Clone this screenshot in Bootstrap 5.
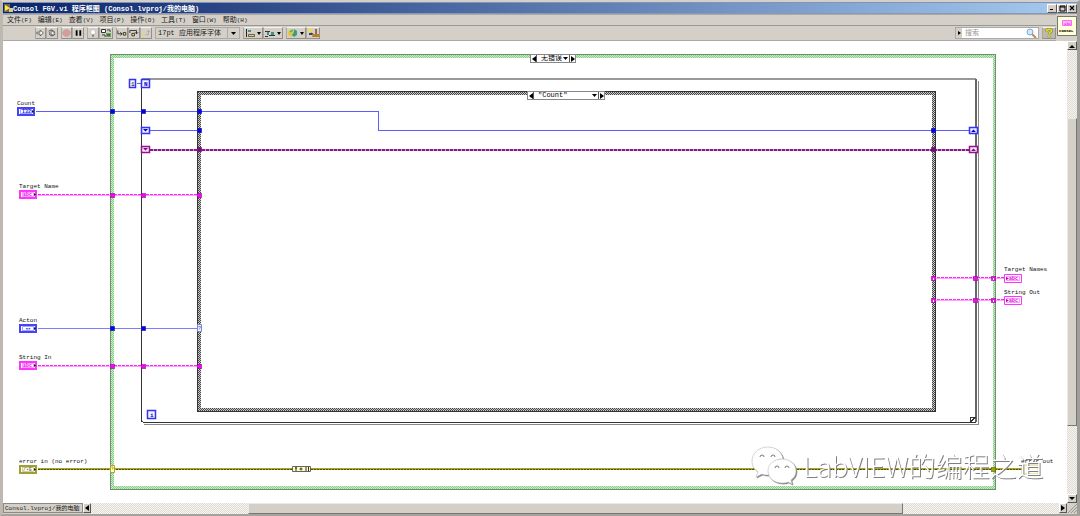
<!DOCTYPE html>
<html lang="zh-CN">
<head>
<meta charset="utf-8">
<meta name="viewport" content="width=device-width, initial-scale=1">
<title>Consol FGV.vi 程序框图</title>
<link rel="stylesheet" href="https://cdn.jsdelivr.net/npm/bootstrap@5.3.0/dist/css/bootstrap.min.css">
<style>
:root{--face:#d4d0c8}
body{font:6px/10px "Liberation Mono","Noto Sans CJK SC",monospace;color:#222;background:var(--face)}
.zh{font-family:"Noto Sans CJK SC",sans-serif;font-size:7px}
.app-window{border:solid var(--face);border-width:2px 3px;border-left-color:#bdb9b1;border-right-color:#a09e9a;border-bottom-color:#a5a29c}
.work-area{min-height:0}
.titlebar{height:12px;background:linear-gradient(90deg,#0a246a,#a6caf0);border-top:1px solid #7f93bb;border-bottom:1px solid #8d98b0;color:#fff;font-size:7px;font-weight:700;padding-left:1px}
button,select,input{font:inherit;color:inherit;border-radius:0;appearance:none;outline-offset:-1px}
.win-btn{width:10px;height:9px;padding:0;border:1px solid;border-color:#fff #555 #555 #fff;background:var(--face);display:flex;align-items:center;justify-content:center;flex:none}
.menubar{height:12px;border-bottom:1px solid #999;border-top:1px solid #aaa}
.menubar a{color:#222;text-decoration:none;white-space:nowrap}
.menu-items{gap:6px}
.toolbar{height:15px;border-bottom:1px solid #aaa;padding:1px 0 1px 32px}
.tool{height:12px;width:12px;padding:0;border:1px solid;border-color:#f5f3ee #929089 #929089 #aaa79f;background:var(--face);display:flex;align-items:center;justify-content:center;flex:none}
.tool svg{width:100%;height:100%;display:block}
.tool-wide{width:20px}
.tool-mid{width:14px}
.tool-slim{width:11px}
.tool-help{background:#bcb9b0}
.group-end{margin-right:3px}
.font-box{width:85px;height:12px;position:relative;border:1px solid #aaa}
.font-box select{width:100%;height:100%;border:0;background:transparent;padding:0 0 0 2px;font:7px/9px "Liberation Mono","Noto Sans CJK SC",monospace}
.font-box svg{position:absolute;right:0;top:0;pointer-events:none}
.search-box{width:84px;height:12px;border:1px solid #aaa;background:var(--face);margin-right:3px}
.search-box input{width:0;flex:1;height:10px;border:0;padding:0 3px;background:#fff;font-size:7px}
.search-box input::placeholder{color:#999}
.vi-icon{width:20px;height:20px;margin:2px 0 0 1px;border:1px solid #777;background:#ffffd8;padding:0;display:block}
.vi-icon svg{display:block;width:100%;height:100%}
.track{background:repeating-conic-gradient(#dedbd4 0 25%,#f6f5f2 0 50%) 0 0/2px 2px}
.thumb{background:var(--face);border:1px solid;border-color:#eceae5 #777 #777 #eceae5}
.vbar{width:10px}
.hbar{height:11px}
.hbar .win-btn{width:8px;height:10px}
.project{width:80px;height:10px;border:1px solid #8b8982;background:var(--face);padding:0 1px;line-height:8px;text-align:left;white-space:nowrap}
.project .zh{font-size:6px}
.diagram{background:#fff;min-width:0;min-height:0}
.diagram>svg{display:block;width:100%;height:100%}
.label-text{font:6px "Liberation Mono",monospace;fill:#111}
.case-sel{height:9px;background:#fff;border:1px solid #888}
.case-sel button{width:5px;padding:0;border:0;background:#fff;display:flex;align-items:center;justify-content:center}
.case-sel select{flex:1;width:0;height:7px;border:solid #555;border-width:0 1px;padding:0 0 0 4px;background:#fff;font:7px/7px "Liberation Mono","Noto Sans CJK SC",monospace;color:#000}
.case-sel .arrow{position:absolute;right:7px;top:2px;pointer-events:none}
.watermark{font:300 27px "Noto Sans CJK SC",sans-serif;fill:#fff}
.wm{filter:drop-shadow(1px 1px 0 #808080)}
</style>
<script src="https://cdn.jsdelivr.net/npm/bootstrap@5.3.0/dist/js/bootstrap.bundle.min.js"></script>
</head>
<body>
<div class="app-window vh-100 d-flex flex-column overflow-hidden">
  <header class="titlebar d-flex align-items-center flex-shrink-0">
    <svg width="9" height="10" viewBox="0 0 9 10" class="flex-shrink-0"><path d="M0 1h6v8H0z" fill="#776b45"/><path d="M1 2l5 3-5 3z" fill="#ffe55c"/><path d="M5 5h4v4H5z" fill="#d9c98a"/></svg>
    <span class="flex-grow-1 text-nowrap">Consol FGV.vi <span class="zh">程序框图</span> (Consol.lvproj/<span class="zh">我的电脑</span>)</span>
    <button class="win-btn" aria-label="最小化"><svg width="6" height="6"><path d="M1 4h3v1H1z"/></svg></button>
    <button class="win-btn" aria-label="最大化"><svg width="7" height="7"><path d="M1 1h5v5H1zM1 2h5" fill="none" stroke="#000"/></svg></button>
    <button class="win-btn" aria-label="关闭"><svg width="6" height="6"><path d="M1 1l4 4M5 1L1 5" stroke="#000" stroke-width="1.2"/></svg></button>
  </header>
  <div class="d-flex flex-shrink-0">
    <div class="flex-grow-1">
      <nav class="menubar d-flex align-items-center ps-1">
        <div class="menu-items d-flex">
        <a href="#"><span class="zh">文件</span>(F)</a><a href="#"><span class="zh">编辑</span>(E)</a><a href="#"><span class="zh">查看</span>(V)</a><a href="#"><span class="zh">项目</span>(P)</a><a href="#"><span class="zh">操作</span>(O)</a><a href="#"><span class="zh">工具</span>(T)</a><a href="#"><span class="zh">窗口</span>(W)</a><a href="#"><span class="zh">帮助</span>(H)</a>
        </div>
      </nav>
      <div class="toolbar d-flex">
        <button class="tool tool-slim" aria-label="运行"><svg viewBox="0 0 11 10"><path d="M1 4h4V1.500l4 3.500-4 3.500V6H1z" fill="#fff" stroke="#333" stroke-width=".8"/></svg></button>
        <button class="tool group-end" aria-label="连续运行"><svg viewBox="0 0 12 10"><path d="M2 3c3-3 7-1 7 2M10 6c-3 4-7 2-7 0" fill="none" stroke="#333"/><path d="M3 4h3V2l3 3-3 3V6H3z" fill="#fff" stroke="#333" stroke-width=".7"/></svg></button>
        <button class="tool tool-slim" aria-label="中止"><svg viewBox="0 0 11 10"><path d="M3.500 1h4L10 3.500v3L7.500 9h-4L1 6.500v-3z" fill="#d99b99" stroke="#b9a5a2"/></svg></button>
        <button class="tool group-end" aria-label="暂停"><svg viewBox="0 0 11 10"><path d="M3 2h2v6H3zM7 2h2v6H7z"/></svg></button>
        <button class="tool" aria-label="高亮执行"><svg viewBox="0 0 11 10"><circle cx="5.500" cy="4" r="2.800" fill="#fff" stroke="#aaa" stroke-width=".7"/><path d="M4.500 7h2v2h-2z" fill="#777"/></svg></button>
        <button class="tool tool-mid group-end" aria-label="保存连线值"><svg viewBox="0 0 12 10"><path d="M1.500 1.500h4v3h-4zM7 2h3v2M2 7h3v2" fill="#fff" stroke="#333"/><path d="M6 5h5v4H6z" fill="#6aa35a"/><path d="M7 7h3" stroke="#234"/></svg></button>
        <button class="tool" aria-label="单步步入"><svg viewBox="0 0 12 10"><path d="M1 2v4h5M4 4l2 2-2 2" fill="none" stroke="#222"/><path d="M7.500 4.500h3v3h-3z" fill="#ffe36a" stroke="#222"/></svg></button>
        <button class="tool" aria-label="单步步过"><svg viewBox="0 0 12 10"><path d="M1 5V2h8v4M7 4l2 2 2-2" fill="none" stroke="#222"/><path d="M3.500 5.500h3v3h-3z" fill="#ffe36a" stroke="#222"/></svg></button>
        <button class="tool group-end" aria-label="单步步出"><svg viewBox="0 0 12 10"><path d="M5 7h4V2M7 4l2-2 2 2" fill="none" stroke="#aaa"/><path d="M1 6h4v3H1z" fill="#e5d48c"/></svg></button>
        <div class="font-box group-end"><select aria-label="字体"><option>17pt 应用程序字体</option></select><svg width="12" height="10"><path d="M.5 0v10" stroke="#aaa"/><path d="M4 4h5L6.500 7z"/></svg></div>
        <button class="tool tool-wide" aria-label="对齐对象"><svg viewBox="0 0 18 10"><path d="M2.500 1v8" stroke="#222"/><path d="M4 2h3v2H4z" fill="#3f8e87"/><path d="M4.500 6.500h6v2h-6z" fill="#e5ce72" stroke="#333" stroke-width=".7"/><path d="M13 4h4l-2 3z"/></svg></button>
        <button class="tool tool-wide group-end" aria-label="分布对象"><svg viewBox="0 0 18 10"><path d="M1 3.500h5M5 7.500h6M1 8.500h3" stroke="#333"/><path d="M3 4h2v3H3z" fill="#3f8e87"/><path d="M7 4h3v3H7z" fill="#3f8e87"/><path d="M13 4h4l-2 3z"/></svg></button>
        <button class="tool tool-wide" aria-label="重新排序"><svg viewBox="0 0 18 10"><path d="M1 4l3-3 3 2v4L4 9 1 7z" fill="#e1c648"/><path d="M7 1l3 2v4L7 9 5 7l2-3z" fill="#369b91"/><path d="M3 4l3-2" stroke="#3fb14c" stroke-width="1.500"/><path d="M13 4h4l-2 3z"/></svg></button>
        <button class="tool tool-mid" aria-label="整理程序框图"><svg viewBox="0 0 12 10"><path d="M1 1h4v3H1z" fill="#f2d950"/><path d="M4 5l3 2M9 1v5" stroke="#593d1c" stroke-width="1.300"/><path d="M6 6h6v3H5z" fill="#b87f25"/><path d="M2 5h3v2H2z" fill="#444"/></svg></button>
        <div class="search-box d-flex align-items-center ms-auto"><svg width="6" height="10" class="flex-shrink-0"><path d="M2 3l3 2-3 2z"/></svg><input type="search" aria-label="搜索" placeholder="搜索"><svg width="12" height="10" class="bg-white flex-shrink-0"><path d="M6 6l4 4" stroke="#c28b54" stroke-width="2"/><circle cx="4" cy="4" r="3" fill="#cdeafc" stroke="#7ba9d3"/></svg></div>
        <button class="tool tool-help tool-mid" aria-label="帮助"><svg viewBox="0 0 11 10"><path d="M3 3.500C3 .5 8 .5 8 3 8 4.500 5.500 4.500 5.500 6.500M5.500 8v1.500" fill="none" stroke="#77722b" stroke-width="2.600"/><path d="M3 3.500C3 .5 8 .5 8 3 8 4.500 5.500 4.500 5.500 6.500M5.500 8v1.500" fill="none" stroke="#eee61c" stroke-width="1.500"/></svg></button>
      </div>
    </div>
    <button class="vi-icon flex-shrink-0" aria-label="VI 图标"><svg viewBox="0 0 18 18"><path d="M4.500 3.500h9v5h-9z" fill="#ffb8ff" stroke="#f6f"/><text x="6" y="8" font-size="4" fill="#e0e">abc</text><text x="1" y="15" font-size="4" font-weight="700">CONSOL</text></svg></button>
  </div>
  <div class="work-area d-flex flex-grow-1">
    <main class="diagram flex-grow-1">
<svg viewBox="3 41 1064 462" preserveAspectRatio="xMinYMin meet">
<defs>
<pattern id="green" width="2" height="2" patternUnits="userSpaceOnUse"><path fill="#c9f0c9" d="M0 0h2v2H0z"/><path fill="#7fce7f" d="M0 0h1v1H0zM1 1h1v1H1z"/></pattern>
<pattern id="dark" width="2" height="2" patternUnits="userSpaceOnUse"><path fill="#ccc" d="M0 0h2v2H0z"/><path fill="#444" d="M0 0h1v1H0zM1 1h1v1H1z"/></pattern>
<g id="term"><path d="M1 1h16v7H1z" fill="#fff" stroke="currentColor" stroke-width="2"/><path d="M3.500 2.500h11v4h-11z" fill="#fff" stroke="currentColor" stroke-width=".5"/><path d="M15 3l2 1.500-2 1.500z" fill="#111"/></g>
<g id="out"><path d="M.5.5h17v8H.5z" fill="#fff" stroke="currentColor"/><path d="M2.500 2.500h13v4h-13z" fill="#fff" stroke="currentColor" stroke-width=".5"/><path d="M2 3l3 1.500L2 6z" fill="#a0a"/></g>
<g id="tun"><path d="M0 0h5v5H0z" fill="#222" opacity=".6"/><path d="M.5.5h4v4h-4z" fill="currentColor"/></g>
<g id="reg"><path d="M.5.5h8v6h-8z" fill="#eef" stroke="currentColor" stroke-width="1.500"/></g>
</defs>
<g shape-rendering="crispEdges" fill="none">
<path stroke="url(#green)" stroke-width="3" d="M112.500 56.500h882v431h-882z"/>
<path stroke="#778a77" d="M110.500 54.500h885v435h-885z"/>
<path stroke="#888" d="M978.500 81v343H144"/>
<path stroke="#999" stroke-width="2" d="M142 79h834"/>
<path stroke="#333" d="M141.500 79v342l2 1.500h832"/>
<path stroke="#666" stroke-width="2" d="M976 79v343"/>
<path stroke="#333" d="M970.500 422v-5h5zM970.500 422.500l5-5"/>
<path stroke="url(#dark)" stroke-width="3" d="M199.500 93.500h734v316h-734z"/>
<path stroke="#333" d="M197.500 91.500h738v320h-738z"/>
</g>
<g fill="none" shape-rendering="crispEdges">
<path stroke="#5c5cff" d="M36 111.500h342.500v18.500M149 130.500h51M378 130.500h593M137 83.500h5"/>
<path stroke="#7d7dff" d="M38 328.500h160"/>
<path stroke="#d39bd3" stroke-width="2" d="M150 150h820"/><path stroke="#8b158b" stroke-width="2" stroke-dasharray="3 1" d="M150 150h820"/>
<path stroke="#ffa0ff" d="M38 195.500h162M38 366.500h162M933 278.500h71M933 300.500h71"/>
<path stroke="#f2f" stroke-dasharray="3 1" d="M38 194.500h162M38 365.500h162M933 277.500h71M933 299.500h71"/>
<path stroke="#a7a52a" stroke-width="2" d="M38 469h984"/><path stroke="#515000" stroke-dasharray="2 1" d="M38 469.500h984"/>
</g>
<g color="#00f">
<use href="#tun" x="110" y="109"/><use href="#tun" x="141" y="109"/><use href="#tun" x="197" y="109"/><use href="#tun" x="197" y="128"/><use href="#tun" x="931" y="128"/><use href="#tun" x="110" y="326"/><use href="#tun" x="141" y="326"/>
</g>
<g color="#808"><use href="#tun" x="197" y="147"/><use href="#tun" x="931" y="147"/></g>
<g color="#f0f"><use href="#tun" x="110" y="193"/><use href="#tun" x="141" y="193"/><use href="#tun" x="197" y="193"/><use href="#tun" x="110" y="364"/><use href="#tun" x="141" y="364"/><use href="#tun" x="197" y="364"/><use href="#tun" x="931" y="276"/><use href="#tun" x="973" y="276"/><use href="#tun" x="991" y="276"/><use href="#tun" x="931" y="298"/><use href="#tun" x="973" y="298"/><use href="#tun" x="991" y="298"/></g>
<path d="M933 278h1v2h-1zM933 300h1v2h-1zM993 278h1v2h-1zM993 300h1v2h-1z" fill="#fff"/>
<use href="#tun" x="991" y="467" color="#a5a000"/>
<path d="M110.500 465.500h4v7h-4z" fill="#fffcb8" stroke="#aaa436"/><path d="M111 467h2v2h-1" fill="none" stroke="#a90" stroke-width=".7"/>
<path d="M197.500 324.500h4v7h-4z" fill="#eef" stroke="#7788cc"/><text x="198" y="330" font-size="5" fill="#33c">?</text>
<g color="#33f"><use href="#reg" x="141" y="127"/><use href="#reg" x="969" y="127"/></g><g color="#918"><use href="#reg" x="141" y="146"/><use href="#reg" x="969" y="146"/></g>
<path d="M143 129h5l-2.500 2.500zM971 132h5l-2.500-2.500z" fill="#00c"/><path d="M143 148h5l-2.500 2.500zM971 151h5l-2.500-2.500z" fill="#808"/>
<g fill="#f4f4ff" stroke="#33e" stroke-width="1.500"><path d="M129.500 79.500h6v8h-6zM141.500 79.500h8v8h-8zM147.500 410.500h8v8h-8z"/></g>
<text x="131" y="86" font-size="6">1</text><text x="144" y="86" font-size="6" fill="#00d" font-weight="700">N</text><text x="150" y="417" font-size="6" fill="#00d" font-weight="700">i</text>
<g color="#44f"><use href="#term" x="17" y="107"/><use href="#term" x="19" y="324"/></g><g color="#f3f"><use href="#term" x="19" y="190"/><use href="#term" x="19" y="361"/><use href="#out" x="1004" y="274"/><use href="#out" x="1004" y="296"/></g><use href="#term" x="19" y="465" color="#a19e35"/>
<g font-size="5" font-weight="700"><text x="22" y="113" fill="#22c">I32</text><text x="25" y="330" fill="#22c">◂▸</text><text x="23" y="196" fill="#e0e">abc</text><text x="23" y="367" fill="#e0e">abc</text><text x="23" y="471" fill="#775">/▪E</text><text x="1009" y="280" fill="#d0d">abc</text><text x="1009" y="302" fill="#d0d">abc</text></g>
<g class="label-text"><text x="17" y="105">Count</text><text x="19" y="188">Target Name</text><text x="19" y="322">Acton</text><text x="19" y="359">String In</text><text x="19" y="463">error in (no error)</text><text x="1004" y="271">Target Names</text><text x="1004" y="294">String Out</text><text x="1021" y="463">error out</text></g>
<path d="M1022 465h16v9h-16z" fill="#fffef0" stroke="#d6d38a"/>
<path d="M292.500 466.500h18v5h-18z" fill="#ffffc4" stroke="#666"/><path d="M295 468h2M296 467v4M299.500 469h3M301 467.500v3M306 467v4M308.500 467v4" stroke="#333"/>
<foreignObject x="530" y="54" width="46" height="10"><div class="case-sel d-flex position-relative"><button aria-label="上一分支"><svg width="4" height="6"><path d="M4 0v6L0 3z"/></svg></button><select aria-label="错误分支"><option>无错误</option></select><svg class="arrow" width="5" height="4"><path d="M0 0h5L2.500 3z"/></svg><button aria-label="下一分支"><svg width="4" height="6"><path d="M0 0v6l4-3z"/></svg></button></div></foreignObject>
<foreignObject x="527" y="91" width="78" height="10"><div class="case-sel d-flex position-relative"><button aria-label="上一分支"><svg width="4" height="6"><path d="M4 0v6L0 3z"/></svg></button><select aria-label="操作分支"><option>"Count"</option></select><svg class="arrow" width="5" height="4"><path d="M0 0h5L2.500 3z"/></svg><button aria-label="下一分支"><svg width="4" height="6"><path d="M0 0v6l4-3z"/></svg></button></div></foreignObject>
<g class="wm" stroke="#bbb" stroke-width=".6">
<path fill="#fff" d="M768 447c-9 0-16 6-16 14 0 5 2 8 6 11l-2 5 6-3c2 1 4 1 7 1-1-9 5-16 14-16-1-7-7-12-15-12z"/>
<path d="M760 457a2 2 0 0 1 4 0M771 457a2 2 0 0 1 4 0" fill="none" stroke="#777" stroke-width="1"/>
</g>
<g class="wm" stroke="#bbb" stroke-width=".6"><path fill="#fff" d="M782 459c-8 0-14 5-14 12s6 12 14 12c2 0 4 0 6-1l4 2-1-4c3-2 5-5 5-9 0-7-6-12-14-12z"/>
<path d="M775 468a2 2 0 0 1 4 0M785 468a2 2 0 0 1 4 0" fill="none" stroke="#777" stroke-width="1"/></g>
<text class="watermark wm" x="803" y="477">LabVIEW的编程之道</text>
</svg>
    </main>
    <div class="vbar d-flex flex-column flex-shrink-0" aria-hidden="true">
      <span class="win-btn"><svg width="6" height="4"><path d="M0 4h6L3 1z"/></svg></span>
      <div class="track" style="flex:68 0 0"></div><div class="thumb" style="flex:309 0 0"></div><div class="track" style="flex:68 0 0"></div>
      <span class="win-btn"><svg width="6" height="4"><path d="M0 0h6L3 3z"/></svg></span>
    </div>
  </div>
  <footer class="hbar d-flex flex-shrink-0">
    <button class="project">Consol.lvproj/<span class="zh">我的电脑</span></button>
    <span class="win-btn"><svg width="4" height="6"><path d="M4 0v6L0 3z"/></svg></span>
    <div class="track" style="flex:157 0 0"></div><div class="thumb" style="flex:656 0 0"></div><div class="track" style="flex:156 0 0"></div>
    <span class="win-btn"><svg width="4" height="6"><path d="M0 0v6l4-3z"/></svg></span>
    <svg width="10" height="10" class="flex-shrink-0"><path d="M1 10l9-9M4 10l6-6M7 10l3-3" stroke="#999"/></svg>
  </footer>
</div>
</body>
</html>
